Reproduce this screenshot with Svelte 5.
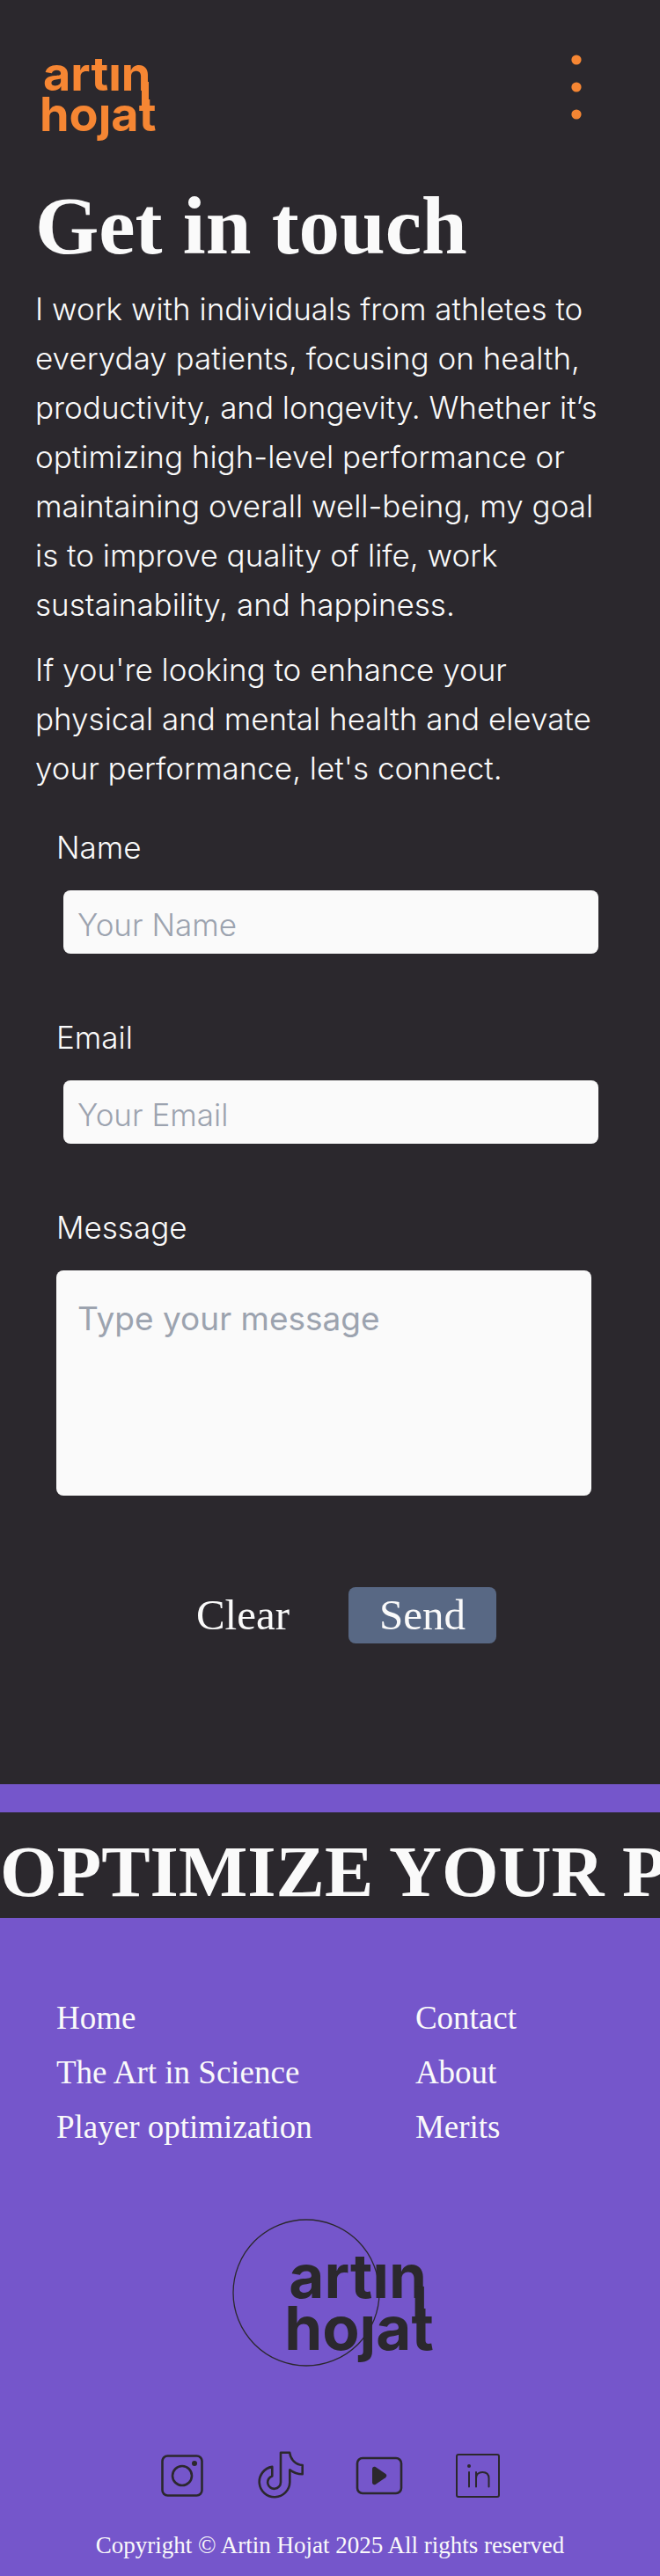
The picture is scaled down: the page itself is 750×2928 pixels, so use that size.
<script>
  const intro = [
    'I work with individuals from athletes to everyday patients, focusing on health, productivity, and longevity. Whether it’s optimizing high-level performance or maintaining overall well-being, my goal is to improve quality of life, work sustainability, and happiness.',
    "If you're looking to enhance your physical and mental health and elevate your performance, let's connect.",
  ];
  const links = ['Home', 'Contact', 'The Art in Science', 'About', 'Player optimization', 'Merits'];

  let name = $state('');
  let email = $state('');
  let message = $state('');

  function clear() {
    name = '';
    email = '';
    message = '';
  }
</script>

<!-- Two stacked lines; the bar joins the last stem of the first to the t below it. -->
{#snippet wordmark()}
  <text x="1" y="42">artın</text>
  <text x="-3" y="88">hoȷat</text>
  <path d="M113 32h8v30h-8z" />
{/snippet}

<div class="page">
  <header>
    <a class="brand" href="#home" aria-label="Artin Hojat">
      <svg class="mark" width="130" height="104" viewBox="0 0 130 104">{@render wordmark()}</svg>
    </a>
    <button class="menu" type="button" aria-label="Menu">
      <svg width="12" height="76" viewBox="0 0 12 76">
        <circle cx="6" cy="7" r="5.6" /><circle cx="6" cy="38" r="5.6" /><circle cx="6" cy="69" r="5.6" />
      </svg>
    </button>
  </header>

  <main>
    <section class="intro">
      <h1>Get in touch</h1>
      {#each intro as text}
        <p>{text}</p>
      {/each}
    </section>

    <form onsubmit={(e) => e.preventDefault()}>
      <div class="field">
        <label for="name">Name</label>
        <input id="name" type="text" placeholder="Your Name" bind:value={name} />
      </div>
      <div class="field">
        <label for="email">Email</label>
        <input id="email" type="email" placeholder="Your Email" bind:value={email} />
      </div>
      <div class="field">
        <label for="message">Message</label>
        <textarea id="message" placeholder="Type your message" bind:value={message}></textarea>
      </div>
      <div class="actions">
        <button type="button" onclick={clear}>Clear</button>
        <button type="submit" class="send">Send</button>
      </div>
    </form>
  </main>

  <footer>
    <div class="banner">OPTIMIZE YOUR PERFORMANCE</div>

    <nav>
      {#each links as link}
        <a href="#{link.toLowerCase().replaceAll(' ', '-')}">{link}</a>
      {/each}
    </nav>

    <svg class="mark seal" width="228" height="172" viewBox="0 0 228 172" role="img" aria-label="Artin Hojat">
      <circle cx="87" cy="86" r="83" />
      <g transform="translate(66 38) scale(1.28)">{@render wordmark()}</g>
    </svg>

    <div class="social">
      <a href="#instagram" aria-label="Instagram">
        <svg viewBox="0 0 64 64">
          <rect x="9.5" y="9.5" width="45" height="45" rx="6" />
          <circle cx="32" cy="32" r="11" />
          <circle class="solid" cx="46" cy="18" r="3" />
        </svg>
      </a>
      <a href="#tiktok" aria-label="TikTok">
        <svg viewBox="0 0 64 64">
          <path d="M32 5.8H42.2C43 13.5 49 19.6 56.7 20V30.3C51.3 30.3 46.4 28.5 42.3 25.3V39.5A17.3 17.3 0 1 1 22.3 21.9V32.4A7.4 7.4 0 1 0 32 39.5Z" />
        </svg>
      </a>
      <a href="#youtube" aria-label="YouTube">
        <svg viewBox="0 0 64 64">
          <rect x="7" y="12" width="50" height="40" rx="6" />
          <path class="solid" d="M24 24.4C24 22 26 21 28 22.2L39 29.8C40.8 31.2 40.8 32.8 39 34.2L28 41.8C26 43 24 42 24 39.6Z" />
        </svg>
      </a>
      <a href="#linkedin" aria-label="LinkedIn">
        <svg class="thin" viewBox="0 0 64 64">
          <rect x="8" y="8" width="48" height="48" rx="2" />
          <circle class="solid" cx="22" cy="21" r="2" />
          <path d="M22 28V44.5M30 28V44.5M30 35C30 30.5 33 28 37.3 28S44.5 30.5 44.5 35V44.5" />
        </svg>
      </a>
    </div>

    <p class="copyright">Copyright © Artin Hojat 2025 All rights reserved</p>
  </footer>
</div>

<style>
  :global(body) {
    background: #2b282d;
  }

  .page {
    --dark: #2b282d;
    --light: #fafafa;
    --orange: #f68633;
    --purple: #7556cb;
    --serif: "Liberation Serif", serif;
    --sans: Inter, "Liberation Sans", sans-serif;
    background: var(--dark);
    color: var(--light);
    font: 300 35px/56px var(--sans);
    overflow: hidden;
  }

  a {
    color: inherit;
    text-decoration: none;
  }

  svg {
    display: block;
  }

  button {
    border: 0;
    padding: 0;
    background: none;
    color: inherit;
    cursor: pointer;
  }

  header {
    display: flex;
    justify-content: space-between;
    align-items: flex-start;
    padding: 61px 89px 46px 48px;
    color: var(--orange);
  }

  .mark {
    fill: currentColor;
    font: 700 54px var(--sans);
    overflow: visible;
  }

  .menu svg {
    fill: currentColor;
  }

  .intro {
    padding: 0 40px;
  }

  h1 {
    margin: 0 0 20px;
    font: 700 93px/92px var(--serif);
  }

  p {
    margin: 0 0 18px;
  }

  form {
    padding: 16px 62px 160px 64px;
  }

  .field {
    display: flex;
    flex-direction: column;
    gap: 21px;
    margin-bottom: 67px;
  }

  input,
  textarea {
    box-sizing: border-box;
    border: 0;
    border-radius: 8px;
    background: var(--light);
    color: var(--dark);
  }

  input {
    height: 72px;
    margin: 0 8px;
    padding: 6px 16px 0;
    font: 300 35px var(--sans);
  }

  textarea {
    height: 256px;
    margin-right: 16px;
    padding: 31px 24px;
    font: 400 37px/48px var(--sans);
    resize: none;
  }

  ::placeholder {
    color: #9ca3af;
    opacity: 1;
  }

  .actions {
    display: flex;
    justify-content: center;
    gap: 32px;
    padding-top: 37px;
  }

  .actions button {
    height: 64px;
    padding: 0 35px;
    border-radius: 8px;
    font: 400 49px/60px var(--serif);
  }

  .actions .send {
    background: #586884;
  }

  footer {
    padding: 32px 0 15px;
    background: var(--purple);
    font-family: var(--serif);
    font-weight: 400;
  }

  .banner {
    box-sizing: border-box;
    height: 120px;
    padding-top: 13px;
    overflow: hidden;
    background: var(--dark);
    font-size: 83px;
    font-weight: 700;
    line-height: 108px;
    white-space: nowrap;
  }

  nav {
    display: grid;
    grid-template-columns: 66% 1fr;
    margin-top: 83px;
    padding: 0 68px 0 64px;
    font-size: 37px;
    line-height: 62px;
  }

  .seal {
    margin: 71px auto 90px;
    color: var(--dark);
  }

  .seal circle {
    fill: none;
    stroke: currentColor;
    stroke-width: 1.3;
  }

  .social {
    display: flex;
    justify-content: center;
    gap: 48px;
    color: var(--dark);
  }

  .social svg {
    width: 64px;
    height: 64px;
    fill: none;
    stroke: currentColor;
    stroke-width: 2.6;
    stroke-linejoin: round;
    stroke-linecap: round;
  }

  .social .thin {
    stroke-width: 2;
  }

  .social .solid {
    fill: currentColor;
    stroke: none;
  }

  .copyright {
    margin: 27px 0 0;
    font-size: 27px;
    line-height: 40px;
    text-align: center;
  }
</style>
